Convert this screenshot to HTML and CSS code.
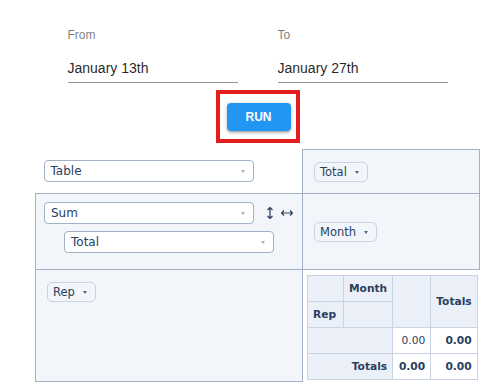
FILE: index.html
```html
<!DOCTYPE html>
<html lang="en">
<head>
  <meta charset="UTF-8">
  <title>Sales Pivot</title>
  <link rel="stylesheet" href="styles.css">
</head>
<body>
  <div class="page">
    <div class="dates">
      <div class="field">
        <label class="field-label">From</label>
        <div class="field-value">January 13th</div>
      </div>
      <div class="field">
        <label class="field-label">To</label>
        <div class="field-value">January 27th</div>
      </div>
    </div>

    <div class="run-row">
      <div class="run-frame">
        <button class="run-btn">RUN</button>
      </div>
    </div>

    <table class="pvt-ui">
      <colgroup>
        <col class="col-left">
        <col class="col-right">
      </colgroup>
      <tr>
        <td class="cell row-top renderers">
          <div class="dropdown">Table<i class="dd-icon"></i></div>
        </td>
        <td class="cell row-top axis axis-mid">
          <span class="attr">Total<i class="tri"></i></span>
        </td>
      </tr>
      <tr>
        <td class="cell row-vals axis vals">
          <div class="vals-line">
            <div class="dropdown">Sum<i class="dd-icon"></i></div>
            <a class="order order-row">
              <svg width="6" height="12" viewBox="0 0 6 12"><path d="M3 0.5 L3 11.5 M0.5 3 L3 0.5 L5.5 3 M0.5 9 L3 11.5 L5.5 9" fill="none" stroke="#2a3f5f" stroke-width="1.2"/></svg>
            </a>
            <a class="order order-col">
              <svg width="12" height="6" viewBox="0 0 12 6"><path d="M0.5 3 L11.5 3 M3 0.5 L0.5 3 L3 5.5 M9 0.5 L11.5 3 L9 5.5" fill="none" stroke="#2a3f5f" stroke-width="1.2"/></svg>
            </a>
          </div>
          <div class="vals-line vals-attr">
            <div class="dropdown">Total<i class="dd-icon"></i></div>
          </div>
        </td>
        <td class="cell row-vals axis axis-mid">
          <span class="attr">Month<i class="tri"></i></span>
        </td>
      </tr>
      <tr>
        <td class="cell row-out axis rows">
          <span class="attr">Rep<i class="tri"></i></span>
        </td>
        <td class="cell row-out output">
          <table class="pvt-table">
            <thead>
              <tr>
                <th class="w-rep"></th>
                <th class="axis-label">Month</th>
                <th class="w-val" rowspan="2"></th>
                <th class="total-label" rowspan="2">Totals</th>
              </tr>
              <tr>
                <th class="axis-label">Rep</th>
                <th></th>
              </tr>
            </thead>
            <tbody>
              <tr>
                <th colspan="2"></th>
                <td>0.00</td>
                <td class="total">0.00</td>
              </tr>
              <tr>
                <th class="total-label" colspan="2">Totals</th>
                <td class="total">0.00</td>
                <td class="total">0.00</td>
              </tr>
            </tbody>
          </table>
        </td>
      </tr>
    </table>
  </div>
</body>
</html>
```

FILE: styles.css
```css
body {
  margin: 0;
  background: #ffffff;
  font-family: 'Liberation Sans', Arial, sans-serif;
}

.page {
  width: 445px;
  margin-left: 35px;
}

.dates {
  display: flex;
  justify-content: center;
  gap: 40px;
  padding-top: 28px;
}

.field {
  width: 170px;
}

.field-label {
  display: block;
  font-size: 12px;
  line-height: 14px;
  color: rgba(0, 0, 0, 0.54);
  margin-bottom: 16px;
}

.field-value {
  font-size: 14px;
  line-height: 20px;
  color: rgba(0, 0, 0, 0.87);
  padding-bottom: 4px;
  border-bottom: 1px solid #949494;
}

.run-row {
  display: flex;
  justify-content: center;
  margin-top: 7px;
}

.run-frame {
  border: 4px solid #e41d1f;
  padding: 9px 5px 8px 7px;
}

.run-btn {
  display: block;
  width: 64px;
  height: 28px;
  padding: 0;
  border: none;
  border-radius: 4px;
  background: #2196f3;
  color: #ffffff;
  font-family: 'Liberation Sans', Arial, sans-serif;
  font-weight: bold;
  font-size: 12px;
  box-shadow: 0 1px 5px rgba(0, 0, 0, 0.2), 0 2px 2px rgba(0, 0, 0, 0.14), 0 3px 1px -2px rgba(0, 0, 0, 0.12);
}

.pvt-ui {
  margin-top: 6px;
  width: 445px;
  table-layout: fixed;
  border-collapse: collapse;
  color: #2a3f5f;
  font-family: 'DejaVu Sans', Verdana, sans-serif;
}

.col-left {
  width: 267px;
}

.cell {
  padding: 0;
}

.row-top {
  height: 43px;
}

.row-vals {
  height: 67px;
}

.row-out {
  height: 100px;
}

.renderers {
  padding-left: 8px;
  vertical-align: middle;
}

.axis {
  border: 1px solid #a2b1c6;
  background: #f2f5fa;
}

.axis-mid {
  vertical-align: middle;
  padding-left: 11px;
}

.rows {
  vertical-align: top;
  padding: 11px 0 0 11px;
}

.vals {
  vertical-align: top;
  padding: 8px 0 0 8px;
}

.vals-line {
  display: flex;
  align-items: center;
}

.vals-attr {
  margin-top: 7px;
  padding-left: 20px;
}

.dropdown {
  position: relative;
  box-sizing: border-box;
  width: 210px;
  height: 22px;
  padding-left: 6px;
  border: 1px solid #a2b1c6;
  border-radius: 4px;
  background: #ffffff;
  font-size: 12px;
  line-height: 20px;
  color: #2a3f5f;
}

.dd-icon {
  position: absolute;
  right: 8px;
  top: 9px;
  width: 0;
  height: 0;
  border-left: 2px solid transparent;
  border-right: 2px solid transparent;
  border-top: 3px solid #a2b1c6;
}

.order {
  display: flex;
  align-items: center;
}

.order-row {
  margin-left: 13px;
}

.order-col {
  margin-left: 8px;
}

.attr {
  display: inline-flex;
  align-items: center;
  box-sizing: border-box;
  height: 20px;
  padding: 0 8px 0 5px;
  border: 1px solid #c8d4e3;
  border-radius: 5px;
  background: #f2f5fa;
  font-size: 11.5px;
  line-height: 14px;
  color: #2a3f5f;
}

.tri {
  width: 0;
  height: 0;
  margin-left: 8px;
  border-left: 2px solid transparent;
  border-right: 2px solid transparent;
  border-top: 3px solid #506784;
}

.output {
  vertical-align: top;
  padding: 5px 0 0 4px;
  background: #ffffff;
}

.pvt-table {
  border-collapse: collapse;
  font-size: 8pt;
  text-align: left;
  font-family: 'DejaVu Sans', Verdana, sans-serif;
}

.pvt-table th {
  background: #ebf0f8;
  border: 1px solid #c8d4e3;
  padding: 5px;
  line-height: 15px;
  font-weight: bold;
  color: #2a3f5f;
}

.pvt-table td {
  background: #ffffff;
  border: 1px solid #c8d4e3;
  padding: 5px;
  line-height: 15px;
  text-align: right;
  vertical-align: top;
  color: #2a3f5f;
}

.pvt-table .w-rep {
  width: 25px;
}

.pvt-table .w-val {
  width: 27px;
}

.pvt-table .total-label {
  text-align: right;
}

.pvt-table .total {
  font-weight: bold;
}
```
